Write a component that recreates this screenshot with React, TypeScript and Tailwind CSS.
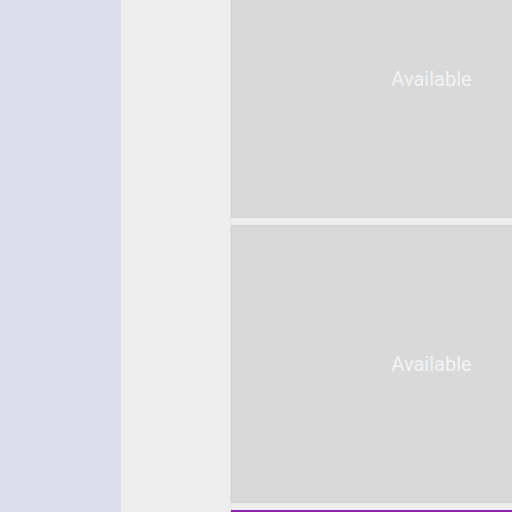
import React from "react";

const slots = ["Available", "Available", ""];

const Slot = ({ label, booked }: { label: string; booked?: boolean }) => {
  return (
    <div
      className={`h-[278px] w-[401px] shrink-0 flex items-center justify-center bg-[#d9d9d9] ${
        booked
          ? "border-t-2 border-[#8e24aa]"
          : "border border-[#d2d2d2]"
      }`}
    >
      {label && (
        <span className="text-[20px] text-[#f3f3f3] font-['Roboto',sans-serif]">
          {label}
        </span>
      )}
    </div>
  );
};

export default function App() {
  return (
    <div className="flex h-screen w-full overflow-hidden bg-[#eeeeee]">
      <div className="w-[121px] shrink-0 bg-[#dcdcec] border-r border-[#e2e2ee]" />
      <div className="w-[110px] shrink-0 bg-[#eeeeee] border-r border-[#e4e4e4]" />
      <div className="flex-1 overflow-hidden">
        <div className="-mt-[60px] flex flex-col gap-[7px]">
          {slots.map((s, i) => (
            <Slot key={i} label={s} booked={i === 2} />
          ))}
        </div>
      </div>
    </div>
  );
}
